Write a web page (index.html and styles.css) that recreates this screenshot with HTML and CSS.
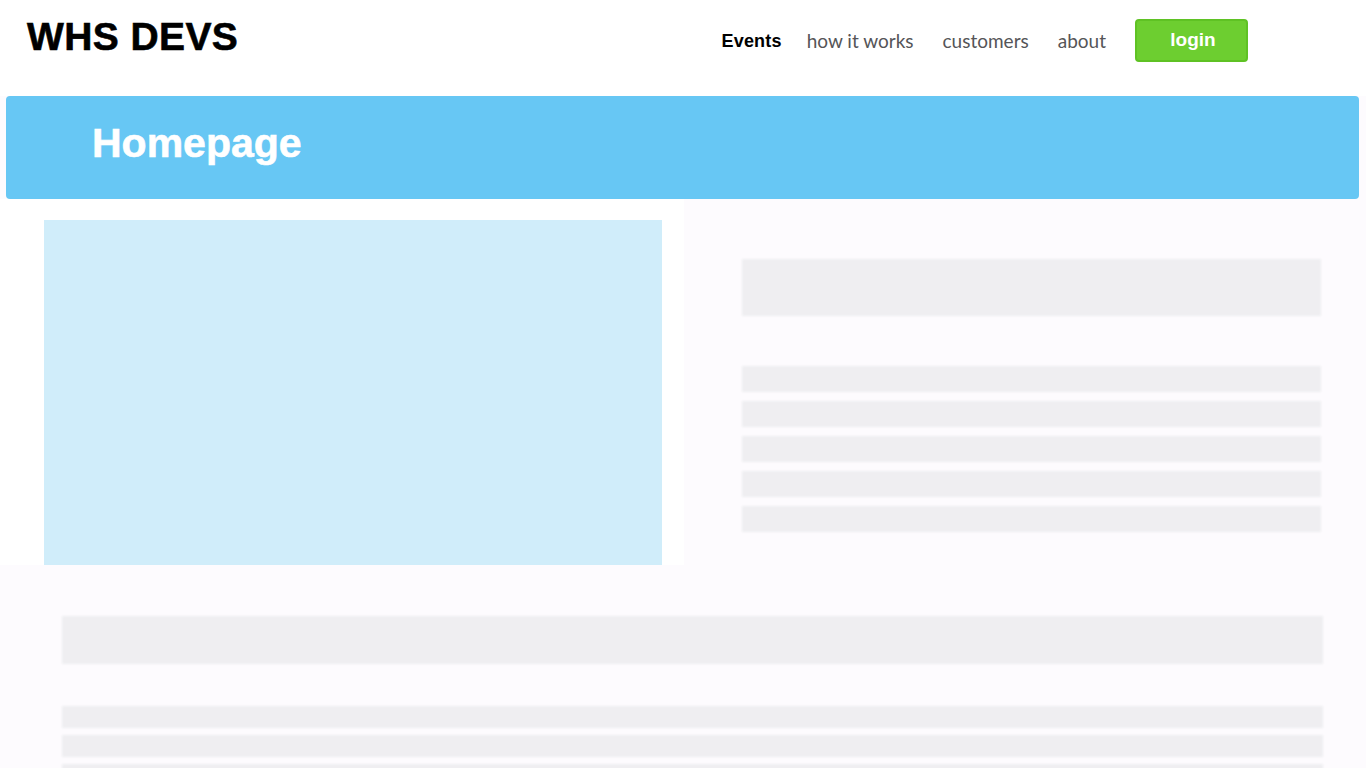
FILE: index.html
```html
<!DOCTYPE html>
<html lang="en">
<head>
<meta charset="utf-8">
<title>WHS DEVS - Homepage</title>
<link rel="stylesheet" href="styles.css">
</head>
<body>
<header class="topbar">
  <div class="logo">WHS DEVS</div>
  <nav class="nav">
    <a class="nav-link nav-active" href="#">Events</a>
    <a class="nav-link" href="#">how it works</a>
    <a class="nav-link" href="#">customers</a>
    <a class="nav-link" href="#">about</a>
    <a class="login" href="#">login</a>
  </nav>
</header>
<section class="banner">
  <h1 class="banner-title">Homepage</h1>
</section>
<section class="content">
  <div class="left-col">
    <div class="media"></div>
  </div>
  <div class="right-col">
    <div class="bar bar-big"></div>
    <div class="bar-list">
      <div class="bar bar-line"></div>
      <div class="bar bar-line"></div>
      <div class="bar bar-line"></div>
      <div class="bar bar-line"></div>
      <div class="bar bar-line"></div>
    </div>
  </div>
</section>
<section class="lower">
  <div class="bar bar-wide"></div>
  <div class="bar-list lower-list">
    <div class="bar bar-thin"></div>
    <div class="bar bar-thin"></div>
    <div class="bar bar-thin"></div>
  </div>
</section>
</body>
</html>
```
FILE: styles.css
```css
html, body {
  margin: 0;
  padding: 0;
}
body {
  background: #fdfbfe;
  font-family: "Liberation Sans", Arial, sans-serif;
  overflow: hidden;
  height: 768px;
}
.topbar {
  height: 96px;
  background: #ffffff;
  display: flex;
  justify-content: space-between;
  align-items: flex-start;
  padding: 0 118px 0 27px;
  box-sizing: border-box;
}
.logo {
  margin-top: 17px;
  font-size: 39px;
  line-height: 1;
  font-weight: 700;
  color: #000;
  letter-spacing: 0.4px;
  -webkit-text-stroke: 0.6px #000;
}
.nav {
  margin-top: 19px;
  height: 43px;
  display: flex;
  align-items: center;
}
.nav-link {
  font-family: Lato, "Liberation Sans", sans-serif;
  font-size: 19px;
  color: #555558;
  text-decoration: none;
  margin-right: 29px;
  line-height: 1;
}
.nav-active {
  font-family: "Liberation Sans", Arial, sans-serif;
  font-weight: 700;
  font-size: 18px;
  color: #000;
  margin-right: 25px;
  margin-left: 1px;
  letter-spacing: 0.2px;
}
.login {
  width: 113px;
  height: 43px;
  margin-top: -1px;
  box-sizing: border-box;
  background: #6dce30;
  border: 2px solid #5fc224;
  border-radius: 4px;
  color: #fff;
  font-family: "Liberation Sans", Arial, sans-serif;
  font-weight: 700;
  font-size: 19px;
  text-decoration: none;
  display: flex;
  align-items: center;
  justify-content: center;
  padding: 0 0 1px 3px;
}
.banner {
  margin: 0 7px 0 6px;
  height: 103px;
  background: #67c7f4;
  border-radius: 4px;
  display: flex;
  align-items: center;
  padding-left: 86px;
}
.banner-title {
  margin: 0 0 8px 0;
  font-size: 41px;
  line-height: 1;
  font-weight: 700;
  color: #ffffff;
  -webkit-text-stroke: 0.6px #ffffff;
}
.content {
  display: grid;
  grid-template-columns: 684px 1fr;
  height: 366px;
}
.left-col {
  background: #ffffff;
  padding: 21px 22px 0 44px;
}
.media {
  width: 618px;
  height: 345px;
  background: #d0edfa;
}
.right-col {
  padding: 60px 45px 0 58px;
}
.bar {
  background: #efeef1;
  filter: blur(1px);
}
.bar-big {
  height: 57px;
}
.bar-list {
  margin-top: 50px;
  display: flex;
  flex-direction: column;
  gap: 9px;
}
.bar-line {
  height: 26px;
}
.lower {
  padding: 51px 43px 0 62px;
}
.bar-wide {
  height: 48px;
}
.lower-list {
  margin-top: 42px;
  gap: 7px;
}
.bar-thin {
  height: 22px;
}
```
